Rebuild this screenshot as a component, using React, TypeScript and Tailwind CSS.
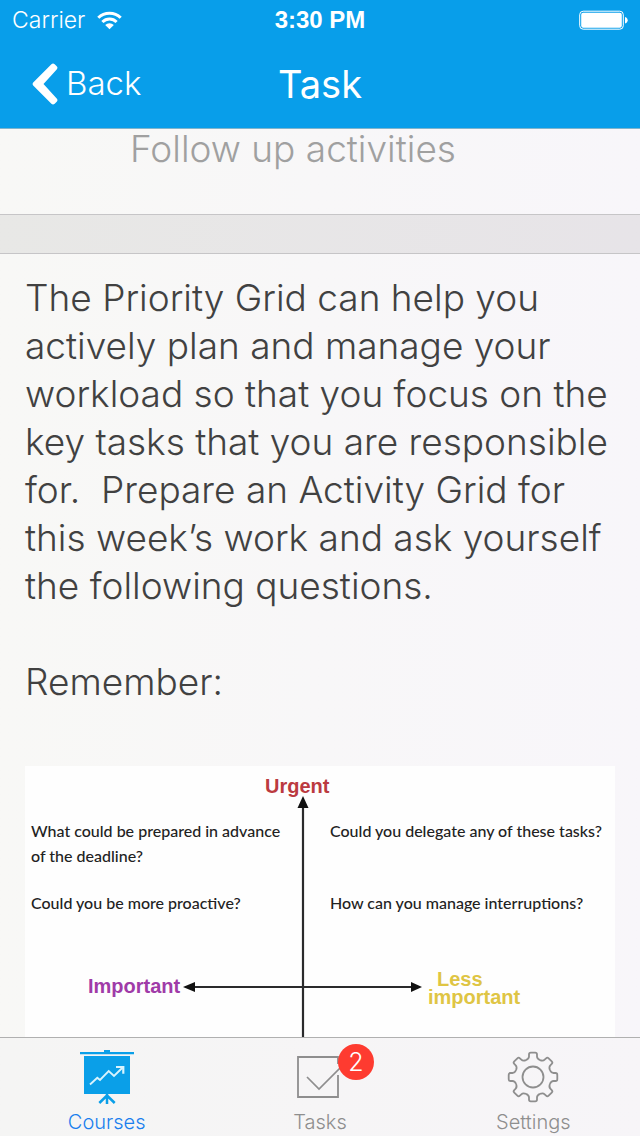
const GEAR_ANGLES = [0, 45, 90, 135, 180, 225, 270, 315];

function WifiIcon() {
  return (
    <svg viewBox="0 0 25 19" className="h-[19px] w-[25px]" fill="none" stroke="currentColor" strokeWidth="3" aria-hidden="true">
      <path d="M1.3 6.8a15.8 15.8 0 0 1 22.4 0" />
      <path d="M5.4 11a10 10 0 0 1 14.2 0" />
      <path d="M8.2 13.9a6.1 6.1 0 0 1 8.6 0L12.5 18.2z" fill="currentColor" stroke="none" />
    </svg>
  );
}

function BatteryIcon() {
  return (
    <svg viewBox="0 0 49 20" className="h-5 w-[49px]" aria-hidden="true">
      <rect x="0.7" y="1.2" width="43.6" height="18" rx="3.5" fill="none" stroke="currentColor" strokeWidth="1" />
      <rect x="2.2" y="2.7" width="40.6" height="15" rx="2" fill="currentColor" />
      <path d="M46 7c3.6.8 3.6 5.800 0 6.600z" fill="currentColor" />
    </svg>
  );
}

function ChevronIcon() {
  return (
    <svg viewBox="0 0 26 42" className="h-[42px] w-[26px]" fill="currentColor" aria-hidden="true">
      <path d="M19.400 1.200Q21 -.3 22.700 1.200L24.700 3.200Q26.200 4.800 24.700 6.400L11.500 21L24.700 35.600Q26.200 37.200 24.700 38.800L22.700 40.800Q21 42.300 19.400 40.800L1.200 22.400Q0 21 1.200 19.600z" />
    </svg>
  );
}

function CoursesIcon() {
  return (
    <svg viewBox="0 0 54 54" className="h-[54px] w-[54px]" fill="none" aria-hidden="true">
      <path d="M24 0h6v2h24v2.200H0V2h24z" fill="#0a9fe8" />
      <rect x="4" y="6" width="46" height="38" fill="#0a9fe8" />
      <path d="M27 44V54M27 45.500L19.300 53M27 45.500L34.700 53" stroke="#0a9fe8" strokeWidth="2.500" />
      <path d="M10 34.500L17.300 27.700L20 30L28.700 21L34 26L42.700 17.500" stroke="#d8f3fd" strokeWidth="1.900" />
      <path d="M36 17H43.300V23.700" stroke="#d8f3fd" strokeWidth="2.200" />
    </svg>
  );
}

function TasksIcon() {
  return (
    <svg viewBox="0 0 46 42" className="h-[42px] w-[46px]" fill="none" stroke="currentColor" strokeWidth="1.800" aria-hidden="true">
      <path d="M41 8V1H1v40h40V19" />
      <path d="M10 21l12 12L46 9" strokeWidth="1.700" />
    </svg>
  );
}

function SettingsIcon() {
  return (
    <svg viewBox="-26 -26 52 52" className="h-[52px] w-[52px]" fill="none" stroke="currentColor" strokeWidth="1.800" aria-hidden="true">
      <circle r="10.500" />
      {GEAR_ANGLES.map((angle) => (
        <path
          key={angle}
          transform={`rotate(${angle})`}
          d="M-7 -16.900C-5.200 -17.700 -4 -18.500 -4 -20.500V-22.500Q-4 -24.300 -2.200 -24.300H2.200Q4 -24.300 4 -22.500V-20.500C4 -18.500 5.200 -17.700 7 -16.900"
        />
      ))}
    </svg>
  );
}

function PriorityGrid() {
  return (
    <svg viewBox="0 0 590 440" className="block w-full bg-[#fefefe]" role="img" aria-label="Priority grid">
      <g stroke="#2a2a2c" fill="#111">
        <path d="M278 40V420" strokeWidth="2.200" />
        <path d="M166 221H388" strokeWidth="1.800" />
        <g stroke="none">
          <path d="M278 30l5.500 12h-11z" />
          <path d="M158 221l12-5v10z" />
          <path d="M397 221l-11-5v10z" />
        </g>
      </g>
      <g className="font-['Liberation_Sans',Arial,sans-serif] text-[20px] font-bold">
        <text x="240" y="27" fill="#bb3a40">Urgent</text>
        <text x="63" y="227" fill="#a03ba8">Important</text>
        <text x="412" y="220" fill="#dfc544">Less</text>
        <text x="403" y="238" fill="#dfc544">important</text>
      </g>
      <g className="font-['Lato',sans-serif] text-[16px] font-medium" fill="#222">
        <text x="6" y="71">What could be prepared in advance</text>
        <text x="6" y="96">of the deadline?</text>
        <text x="6" y="143">Could you be more proactive?</text>
        <text x="305" y="71">Could you delegate any of these tasks?</text>
        <text x="305" y="143">How can you manage interruptions?</text>
      </g>
    </svg>
  );
}

export default function App() {
  return (
    <div className="flex h-screen flex-col overflow-hidden bg-linear-to-r from-[#f8f8f6] to-[#f8f6fa] font-['Inter','Liberation_Sans',sans-serif] font-light">
      <header className="shrink-0 border-b border-[#7fb4cc] bg-[#089eea] text-white">
        <div className="grid h-10 grid-cols-3 items-center px-3">
          <div className="flex items-center gap-3">
            <span className="text-[23px]">Carrier</span>
            <WifiIcon />
          </div>
          <time className="text-center font-['Liberation_Sans',Arial,sans-serif] text-[24px] font-bold">3:30 PM</time>
          <div className="flex justify-end">
            <BatteryIcon />
          </div>
        </div>
        <div className="grid h-[88px] grid-cols-3 items-center px-8">
          <button type="button" className="flex items-center gap-2 justify-self-start text-[33px]">
            <ChevronIcon />
            Back
          </button>
          <h1 className="text-center text-[38px] font-normal">Task</h1>
        </div>
      </header>

      <main className="min-h-0 flex-1 overflow-hidden">
        <h2 className="h-[85px] pl-[130px] text-[37px] leading-10 text-[#a0a0a0]">Follow up activities</h2>
        <div className="h-10 border-y border-[#c6c5c7] bg-linear-to-r from-[#e8e8e6] to-[#e7e4e8]" />
        <article className="px-[25px] pt-5 text-[37px] leading-[48px] text-[#414141]">
          <p>
            The Priority Grid can help you actively plan and manage your workload so that you focus on the key tasks that
            you are responsible for.&nbsp; Prepare an Activity Grid for this week’s work and ask yourself the following
            questions.
          </p>
          <p className="mt-12 mb-[60px]">Remember:</p>
          <PriorityGrid />
        </article>
      </main>

      <nav className="grid h-[99px] shrink-0 grid-cols-3 border-t border-[#b0b0b0] bg-linear-to-r from-[#f5f5f4] to-[#f7f5f8] text-[20px] leading-6 text-[#8e8e8e]">
        <a href="#courses" aria-current="page" className="flex flex-col items-center justify-between pt-3 pb-[2px] text-[#1a7fee]">
          <CoursesIcon />
          Courses
        </a>
        <a href="#tasks" className="flex flex-col items-center justify-between pt-[18px] pb-[2px]">
          <span className="relative">
            <TasksIcon />
            <span className="absolute -top-3 left-[41px] flex size-9 items-center justify-center rounded-full bg-[#fe3b30] text-[25px] text-white">
              2
            </span>
          </span>
          Tasks
        </a>
        <a href="#settings" className="flex flex-col items-center justify-between pt-[13px] pb-[2px]">
          <SettingsIcon />
          Settings
        </a>
      </nav>
    </div>
  );
}
